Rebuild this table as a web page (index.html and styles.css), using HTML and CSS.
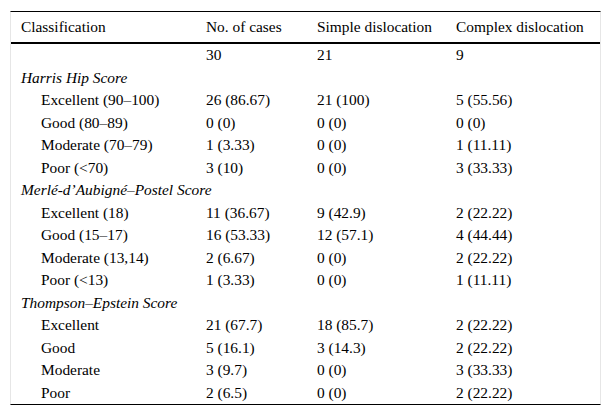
FILE: index.html
```html
<!DOCTYPE html>
<html>
<head>
<meta charset="utf-8">
<link rel="stylesheet" href="styles.css">
</head>
<body>
<div class="wrap">
<table class="results">
  <colgroup>
    <col class="c1"><col class="c2"><col class="c3"><col class="c4">
  </colgroup>
  <thead>
    <tr><th>Classification</th><th>No. of cases</th><th>Simple dislocation</th><th>Complex dislocation</th></tr>
  </thead>
  <tbody>
    <tr><td></td><td>30</td><td>21</td><td>9</td></tr>
    <tr class="group"><td colspan="4">Harris Hip Score</td></tr>
    <tr><td class="sub">Excellent (90–100)</td><td>26 (86.67)</td><td>21 (100)</td><td>5 (55.56)</td></tr>
    <tr><td class="sub">Good (80–89)</td><td>0 (0)</td><td>0 (0)</td><td>0 (0)</td></tr>
    <tr><td class="sub">Moderate (70–79)</td><td>1 (3.33)</td><td>0 (0)</td><td>1 (11.11)</td></tr>
    <tr><td class="sub">Poor (&lt;70)</td><td>3 (10)</td><td>0 (0)</td><td>3 (33.33)</td></tr>
    <tr class="group"><td colspan="4">Merlé-d’Aubigné–Postel Score</td></tr>
    <tr><td class="sub">Excellent (18)</td><td>11 (36.67)</td><td>9 (42.9)</td><td>2 (22.22)</td></tr>
    <tr><td class="sub">Good (15–17)</td><td>16 (53.33)</td><td>12 (57.1)</td><td>4 (44.44)</td></tr>
    <tr><td class="sub">Moderate (13,14)</td><td>2 (6.67)</td><td>0 (0)</td><td>2 (22.22)</td></tr>
    <tr><td class="sub">Poor (&lt;13)</td><td>1 (3.33)</td><td>0 (0)</td><td>1 (11.11)</td></tr>
    <tr class="group"><td colspan="4">Thompson–Epstein Score</td></tr>
    <tr><td class="sub">Excellent</td><td>21 (67.7)</td><td>18 (85.7)</td><td>2 (22.22)</td></tr>
    <tr><td class="sub">Good</td><td>5 (16.1)</td><td>3 (14.3)</td><td>2 (22.22)</td></tr>
    <tr><td class="sub">Moderate</td><td>3 (9.7)</td><td>0 (0)</td><td>3 (33.33)</td></tr>
    <tr><td class="sub">Poor</td><td>2 (6.5)</td><td>0 (0)</td><td>2 (22.22)</td></tr>
  </tbody>
</table>
</div>
</body>
</html>
```
FILE: styles.css
```css
html, body {
  margin: 0;
  padding: 0;
  background: #ffffff;
}
.wrap {
  padding: 11px 10px 0 10px;
}
.results {
  width: 591px;
  border-collapse: separate;
  border-spacing: 0;
  table-layout: fixed;
  font-family: "Liberation Serif", serif;
  font-size: 15.4px;
  color: #000;
  border-top: 1px solid #000;
  border-bottom: 1px solid #000;
  border-left: 1px solid #e6e6e6;
  border-right: 1px solid #e6e6e6;
}
.c1 { width: 185px; }
.c2 { width: 111px; }
.c3 { width: 139px; }
.c4 { width: 154px; }
.results th {
  font-weight: normal;
  text-align: left;
  height: 30px;
  padding: 0 0 0 10px;
  line-height: 30px;
  border-bottom: 2px solid #000;
  white-space: nowrap;
}
.results td {
  height: 22.5px;
  padding: 0 0 0 10px;
  line-height: 22.5px;
  white-space: nowrap;
  vertical-align: middle;
}
.results td.sub {
  padding-left: 30px;
}
.results tr.group td {
  font-style: italic;
}
```
